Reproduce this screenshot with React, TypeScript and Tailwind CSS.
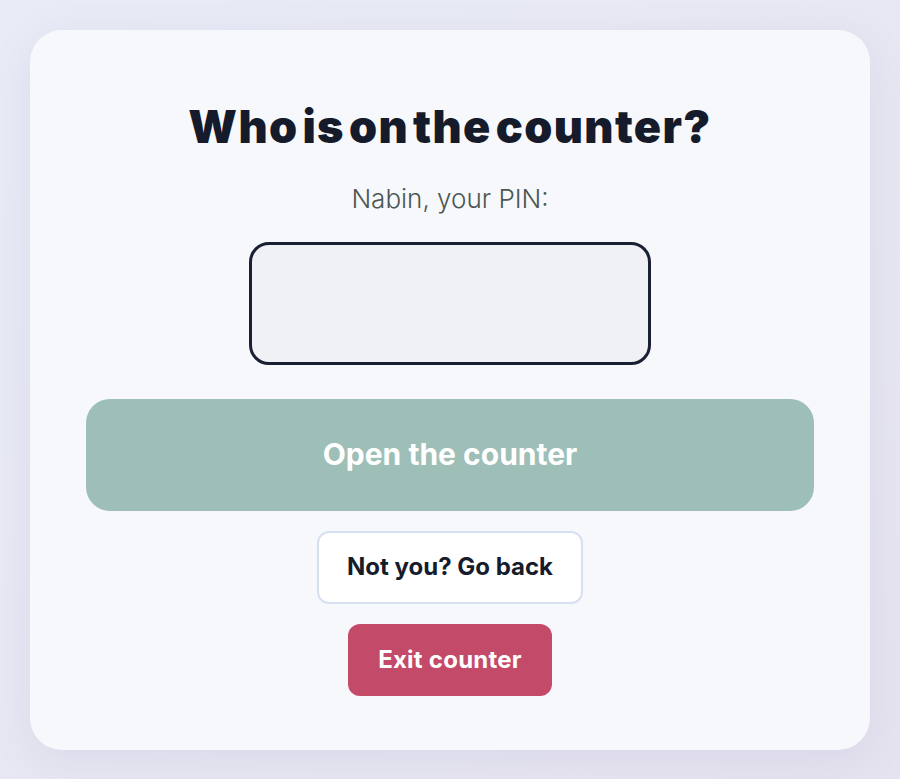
import React, { useState } from "react";

export default function App() {
  const [pin, setPin] = useState("");

  return (
    <div className="min-h-screen w-full bg-gradient-to-br from-[#e8ecf6] to-[#e6e3f0] p-[30px] font-['Inter',sans-serif]">
      <div className="flex flex-col items-center rounded-[32px] bg-[#f7f8fc] px-[56px] pt-[70px] pb-[54px] shadow-[0_10px_40px_rgba(120,120,170,0.12)]">
        <h1 className="text-[45px] leading-[1.2] font-black tracking-[0.03em] text-[#151b2b] [word-spacing:-0.14em]">
          Who is on the counter?
        </h1>
        <p className="mt-[29px] text-[26px] leading-[1.25] font-light text-[#4b5751]">
          Nabin, your PIN:
        </p>
        <input
          type="password"
          value={pin}
          onChange={(e) => setPin(e.target.value)}
          className="mt-[26px] h-[123px] w-[402px] rounded-[20px] border-[3px] border-[#1a2033] bg-[#f0f1f5] text-center text-[32px] outline-none"
        />
        <button className="mt-[34px] h-[112px] w-full rounded-[24px] bg-[#9ebfb8] text-[30px] font-bold text-white">
          Open the counter
        </button>
        <button className="mt-[20px] h-[73px] w-[266px] rounded-[12px] border-2 border-[#d6e0f0] bg-white text-[24px] font-bold text-[#161c2b]">
          Not you? Go back
        </button>
        <button className="mt-[20px] h-[72px] w-[204px] rounded-[12px] bg-[#c44a69] text-[24px] font-bold tracking-[0.01em] text-white">
          Exit counter
        </button>
      </div>
    </div>
  );
}
